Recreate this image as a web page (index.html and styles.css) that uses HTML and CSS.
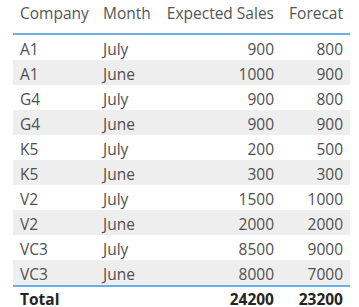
FILE: index.html
```html
<!DOCTYPE html>
<html>
<head>
<meta charset="utf-8">
<link rel="stylesheet" href="styles.css">
</head>
<body>
<div class="wrap">
<table class="grid">
  <colgroup>
    <col class="c1"><col class="c2"><col class="c3"><col class="c4">
  </colgroup>
  <thead>
    <tr><th class="l">Company</th><th class="l">Month</th><th class="r">Expected Sales</th><th class="r">Forecat</th></tr>
  </thead>
  <tbody>
    <tr><td class="l">A1</td><td class="l">July</td><td class="r">900</td><td class="r">800</td></tr>
    <tr><td class="l">A1</td><td class="l">June</td><td class="r">1000</td><td class="r">900</td></tr>
    <tr><td class="l">G4</td><td class="l">July</td><td class="r">900</td><td class="r">800</td></tr>
    <tr><td class="l">G4</td><td class="l">June</td><td class="r">900</td><td class="r">900</td></tr>
    <tr><td class="l">K5</td><td class="l">July</td><td class="r">200</td><td class="r">500</td></tr>
    <tr><td class="l">K5</td><td class="l">June</td><td class="r">300</td><td class="r">300</td></tr>
    <tr><td class="l">V2</td><td class="l">July</td><td class="r">1500</td><td class="r">1000</td></tr>
    <tr><td class="l">V2</td><td class="l">June</td><td class="r">2000</td><td class="r">2000</td></tr>
    <tr><td class="l">VC3</td><td class="l">July</td><td class="r">8500</td><td class="r">9000</td></tr>
    <tr><td class="l">VC3</td><td class="l">June</td><td class="r">8000</td><td class="r">7000</td></tr>
  </tbody>
  <tfoot>
    <tr><td class="l">Total</td><td class="l"></td><td class="r">24200</td><td class="r">23200</td></tr>
  </tfoot>
</table>
</div>
</body>
</html>
```
FILE: styles.css
```css
html, body {
  margin: 0;
  padding: 0;
  background: #ffffff;
}
.wrap {
  padding-left: 13px;
  width: 337px;
}
.grid {
  border-collapse: collapse;
  table-layout: fixed;
  width: 337px;
  font-family: "Open Sans", "Noto Sans", sans-serif;
  font-size: 15.5px;
  line-height: 21px;
  color: #505050;
}
.c1 { width: 83px; }
.c2 { width: 60px; }
.c3 { width: 125px; }
.c4 { width: 69px; }
.grid th, .grid td {
  padding: 0 7px;
  white-space: nowrap;
  font-weight: normal;
}
.grid .l { text-align: left; }
.grid .r { text-align: right; }
.grid thead th {
  padding-top: 3px;
  padding-bottom: 9px;
  border-bottom: 2px solid #6aaee6;
  color: #555555;
}
.grid tbody td {
  padding-top: 4px;
  padding-bottom: 0;
  height: 21px;
}
.grid tbody tr:nth-child(even) td {
  background: #eeeeee;
}
.grid tfoot td {
  border-top: 2px solid #6aaee6;
  padding-top: 2px;
  font-weight: bold;
  color: #252423;
}
```
